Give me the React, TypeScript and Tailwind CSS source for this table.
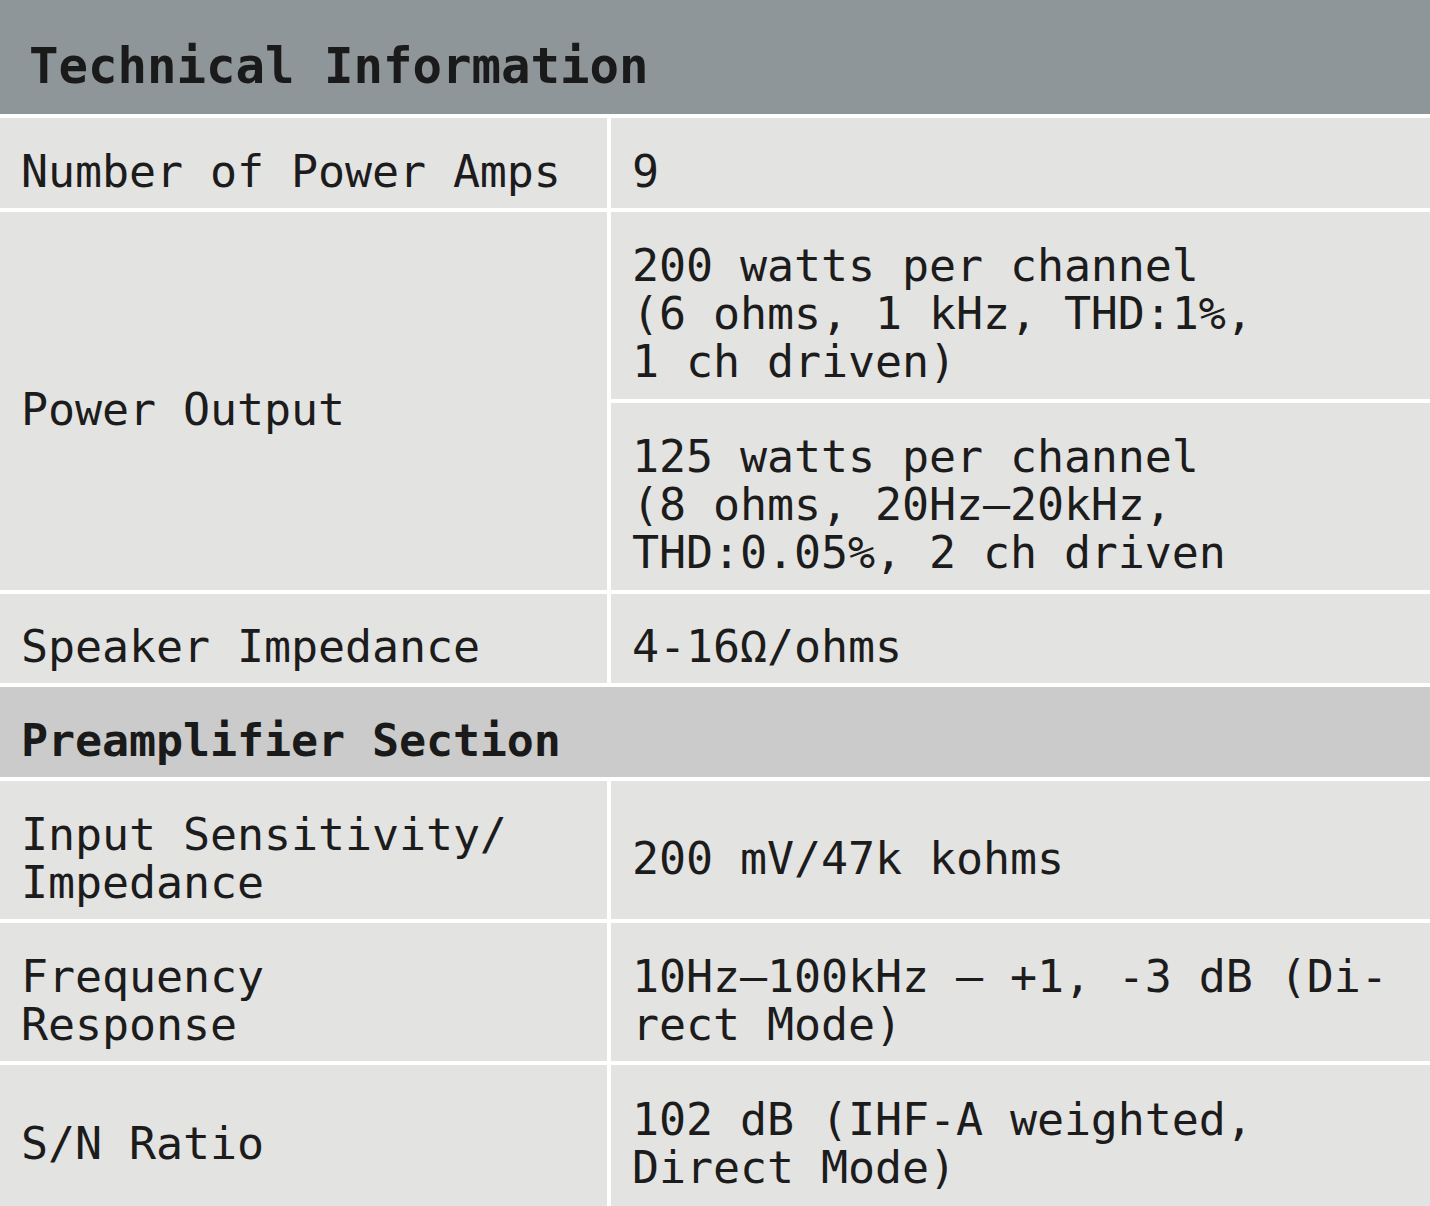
import React from "react";

const font = "font-['DejaVu_Sans_Mono','Liberation_Mono',monospace]";

function Cell({ children, className = "" }: any) {
  return (
    <div className={`flex items-center pt-[17px] pl-[21px] bg-[#e3e3e2] text-[45px] leading-[48px] tracking-[-0.1px] text-[#1c1c1c] whitespace-pre ${className}`}>
      <div>{children}</div>
    </div>
  );
}

export default function App() {
  return (
    <div className={`w-[1430px] h-[1206px] bg-white overflow-hidden ${font}`}>
      <div className="grid grid-cols-[607px_1fr] grid-rows-[114px_90px_187px_187px_89px_90px_138px_138px_141px] gap-[4px]">
        <div className="col-span-2 flex items-center pt-[19px] pl-[29px] bg-[#8e9699] text-[49px] font-bold text-[#1a1a1a]">
          Technical Information
        </div>

        <Cell>Number of Power Amps</Cell>
        <Cell>9</Cell>

        <Cell className="row-span-2">Power Output</Cell>
        <Cell>
          200 watts per channel
          <br />
          (6 ohms, 1 kHz, THD:1%,
          <br />1 ch driven)
        </Cell>
        <Cell>
          125 watts per channel
          <br />
          (8 ohms, 20Hz–20kHz,
          <br />
          THD:0.05%, 2 ch driven
        </Cell>

        <Cell>Speaker Impedance</Cell>
        <Cell>4-16Ω/ohms</Cell>

        <div className="col-span-2 flex items-center pt-[17px] pl-[21px] bg-[#cbcbcb] text-[45px] tracking-[-0.1px] font-bold text-[#1a1a1a]">
          Preamplifier Section
        </div>

        <Cell>
          Input Sensitivity/
          <br />
          Impedance
        </Cell>
        <Cell>200 mV/47k kohms</Cell>

        <Cell>
          Frequency
          <br />
          Response
        </Cell>
        <Cell>
          10Hz–100kHz – +1, -3 dB (Di-
          <br />
          rect Mode)
        </Cell>

        <Cell>S/N Ratio</Cell>
        <Cell>
          102 dB (IHF-A weighted,
          <br />
          Direct Mode)
        </Cell>
      </div>
    </div>
  );
}
